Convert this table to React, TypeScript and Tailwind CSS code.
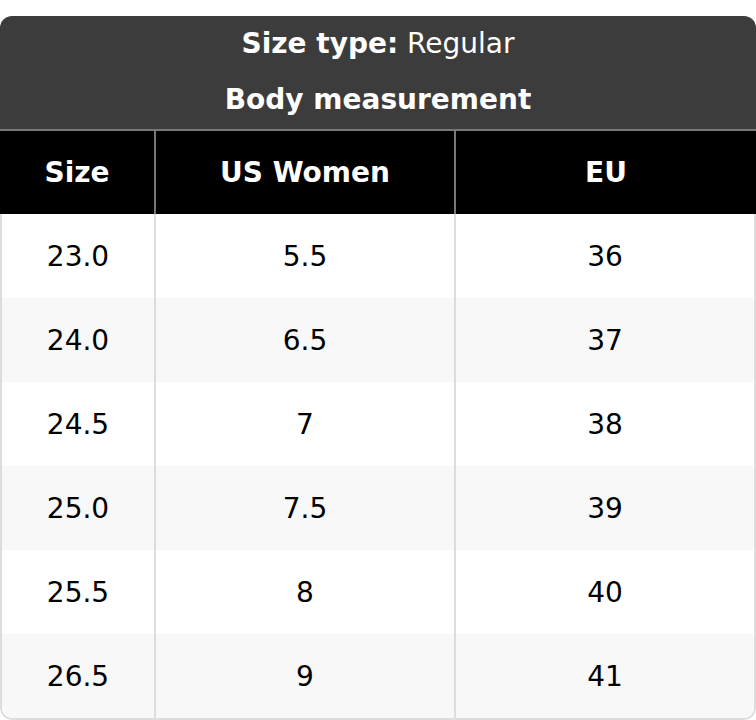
const rows = [
  { size: "23.0", us: "5.5", eu: "36" },
  { size: "24.0", us: "6.5", eu: "37" },
  { size: "24.5", us: "7", eu: "38" },
  { size: "25.0", us: "7.5", eu: "39" },
  { size: "25.5", us: "8", eu: "40" },
  { size: "26.5", us: "9", eu: "41" },
]

export default function App() {
  return (
    <div className="bg-white pt-[16px] font-['DejaVu_Sans',sans-serif] text-[28px]">
      <div className="overflow-hidden rounded-[12px]">
        <div className="bg-[#3c3c3c] pt-[10px] pb-[11px] text-center leading-[36px] text-white">
          <div>
            <span className="font-bold">Size type:</span> Regular
          </div>
          <div className="mt-[20px] font-bold">Body measurement</div>
        </div>
        <div className="grid grid-cols-[156px_300px_1fr] border-t-2 border-[#777777] bg-black text-center font-bold text-white">
          <div className="flex h-[83px] items-center justify-center border-r-2 border-[#777777]">Size</div>
          <div className="flex h-[83px] items-center justify-center border-r-2 border-[#777777]">US Women</div>
          <div className="flex h-[83px] items-center justify-center">EU</div>
        </div>
        <div className="overflow-hidden rounded-b-[12px] border-2 border-t-0 border-[#dddddd]">
          {rows.map((r, i) => (
            <div
              key={r.size}
              className={`grid grid-cols-[154px_300px_1fr] text-center text-black ${i % 2 === 1 ? "bg-[#f8f8f8]" : "bg-white"}`}
            >
              <div className="flex h-[84px] items-center justify-center pt-[2px] border-r-2 border-[#dddddd]">{r.size}</div>
              <div className="flex h-[84px] items-center justify-center pt-[2px] border-r-2 border-[#dddddd]">{r.us}</div>
              <div className="flex h-[84px] items-center justify-center pt-[2px]">{r.eu}</div>
            </div>
          ))}
        </div>
      </div>
    </div>
  )
}
